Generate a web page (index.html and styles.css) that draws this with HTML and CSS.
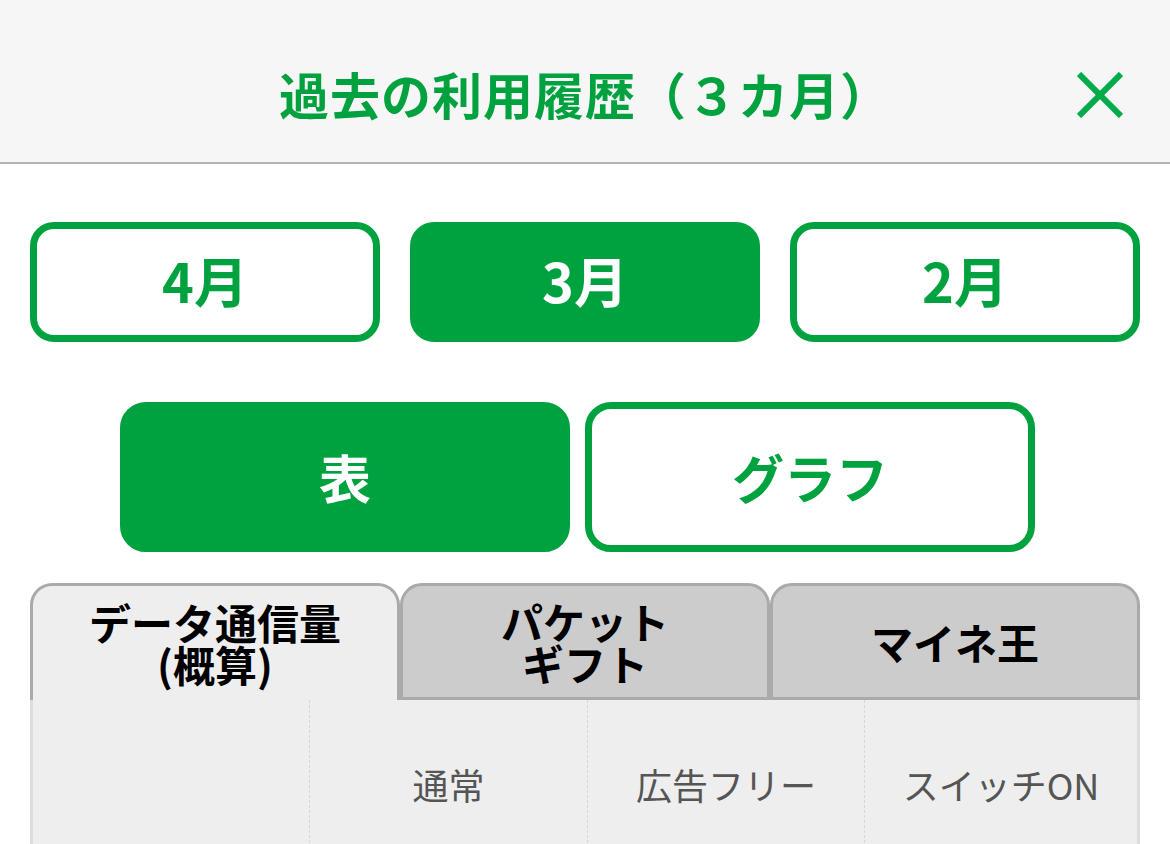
FILE: index.html
```html
<!DOCTYPE html>
<html lang="ja">
<head>
<meta charset="utf-8">
<title>過去の利用履歴</title>
<link rel="stylesheet" href="styles.css">
</head>
<body>
<header class="header">
  <h1 class="title">過去の利用履歴（３カ月）</h1>
  <button class="close" aria-label="閉じる">
    <svg width="46" height="46" viewBox="0 0 46 46"><path d="M2 2 L44 44 M44 2 L2 44" stroke="#00ab4a" stroke-width="6" fill="none"/></svg>
  </button>
</header>
<main class="main">
  <div class="months">
    <button class="btn month">4月</button>
    <button class="btn month active">3月</button>
    <button class="btn month">2月</button>
  </div>
  <div class="views">
    <button class="btn view active">表</button>
    <button class="btn view">グラフ</button>
  </div>
  <div class="tabs">
    <div class="tab current"><span class="line">データ通信量</span><span class="line">(概算)</span></div>
    <div class="tab"><span class="line">パケット</span><span class="line">ギフト</span></div>
    <div class="tab"><span class="line">マイネ王</span></div>
  </div>
  <div class="table">
    <div class="cell"></div>
    <div class="cell">通常</div>
    <div class="cell">広告フリー</div>
    <div class="cell">スイッチON</div>
  </div>
</main>
</body>
</html>
```
FILE: styles.css
```css
* { box-sizing: border-box; }
html, body { margin: 0; padding: 0; background: #fff; overflow: hidden; }
body {
  font-family: "Noto Sans CJK JP", "Noto Sans", sans-serif;
  width: 1170px;
  height: 844px;
}
.header {
  position: relative;
  height: 164px;
  background: #f6f6f6;
  border-bottom: 2px solid #b4b4b4;
  display: flex;
  align-items: center;
  justify-content: center;
  padding-top: 24px;
}
.title {
  margin: 0;
  font-size: 50px;
  font-weight: 700;
  color: #00a23f;
  letter-spacing: 1px;
  line-height: 1;
}
.close {
  position: absolute;
  right: 47px;
  top: 72px;
  border: 0;
  padding: 0;
  background: none;
  width: 46px;
  height: 46px;
}
.close svg { display: block; }
.main { padding: 0 30px; }
.btn {
  font-family: inherit;
  font-weight: 700;
  border: 7px solid #00a23f;
  background: #fff;
  color: #00a23f;
  padding: 0;
  display: flex;
  align-items: center;
  justify-content: center;
  line-height: 1;
}
.btn.active { background: #00a23f; color: #fff; }
.months {
  display: flex;
  gap: 30px;
  margin-top: 58px;
}
.month {
  width: 350px;
  height: 120px;
  border-radius: 24px;
  font-size: 54px;
  padding-bottom: 4px;
}
.views {
  display: flex;
  gap: 15px;
  margin-top: 60px;
  padding-left: 90px;
}
.view {
  width: 450px;
  height: 150px;
  border-radius: 26px;
  font-size: 52px;
}
.tabs {
  display: flex;
  margin-top: 31px;
}
.tab {
  width: 370px;
  height: 117px;
  background: #cccccc;
  border: 3px solid #aaaaaa;
  border-radius: 22px 22px 0 0;
  display: flex;
  flex-direction: column;
  align-items: center;
  justify-content: center;
  text-align: center;
  font-size: 42px;
  font-weight: 700;
  color: #000;
}
.line {
  display: block;
  line-height: 42px;
  height: 42px;
}
.tab.current {
  background: #eeeeee;
  border-bottom: 0;
}
.table {
  display: grid;
  grid-template-columns: 276px 278px 277px 1fr;
  height: 168px;
  background: #eeeeee;
  border-left: 3px solid #dddddd;
  border-right: 3px solid #dddddd;
}
.cell {
  display: flex;
  align-items: center;
  justify-content: center;
  font-size: 36px;
  color: #555555;
}
.cell + .cell { border-left: 1px dashed #d6d6d6; }
```
